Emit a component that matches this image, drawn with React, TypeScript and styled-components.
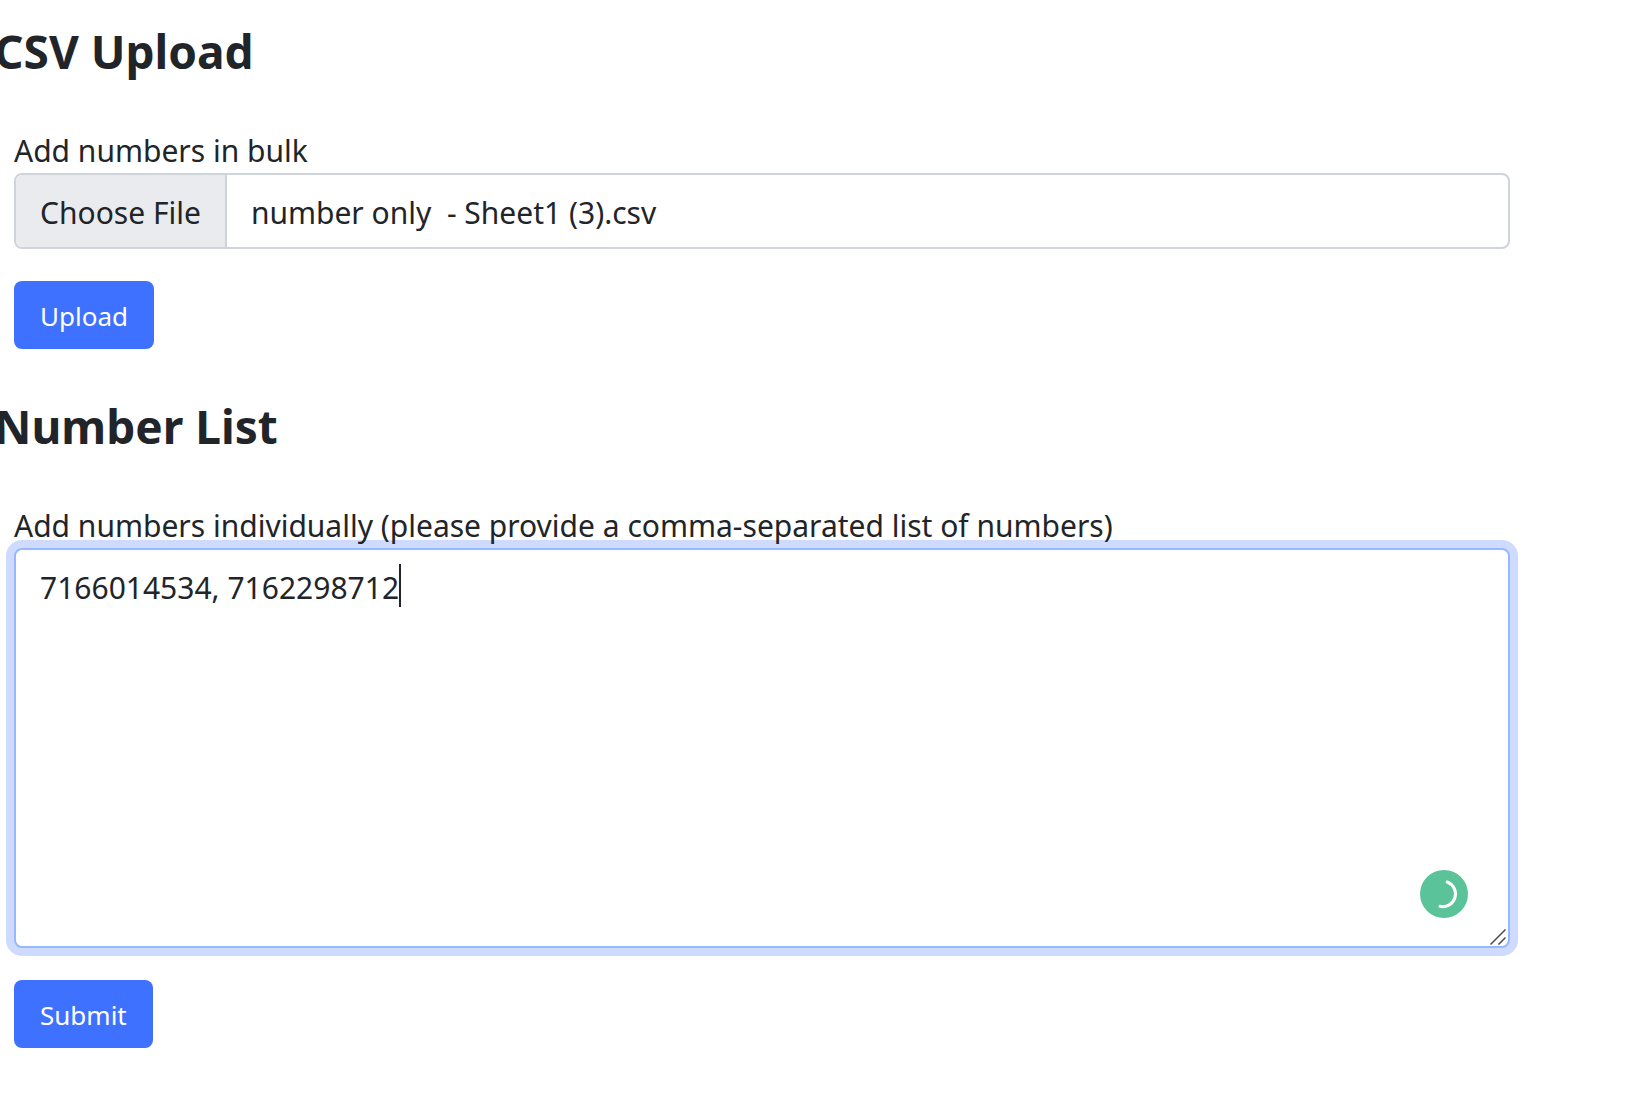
import React, { useLayoutEffect, useRef, useState } from "react";
import styled, { createGlobalStyle } from "styled-components";

const fontStack = '"Segoe UI", "Noto Sans", "Open Sans", sans-serif';

const GlobalStyle = createGlobalStyle`
  *, *::before, *::after { box-sizing: border-box; }
  body {
    margin: 0;
    overflow-x: hidden;
    background: #fff;
    color: #212529;
    font: 400 30px/48px ${fontStack};
  }
`;

const Page = styled.main`
  display: flex;
  flex-direction: column;
  gap: 49px;
  padding: 23px 130px 56px 14px;
`;

const Section = styled.section`
  display: flex;
  flex-direction: column;
`;

const Heading = styled.h2`
  margin: 0 0 46px -20px;
  font-size: 46px;
  font-weight: 700;
  line-height: 56px;
`;

const Form = styled.form`
  display: flex;
  flex-direction: column;
  align-items: stretch;
`;

const FieldLabel = styled.label`
  position: relative;
  z-index: 1;
  align-self: flex-start;
  padding-top: 4px;
  line-height: 44px;
`;

const FileField = styled.label`
  position: relative;
  display: flex;
  border: 2px solid #ced4da;
  border-radius: 8px;
  overflow: hidden;
  cursor: pointer;
`;

const FileInput = styled.input`
  position: absolute;
  inset: 0;
  width: 100%;
  height: 100%;
  opacity: 0;
  cursor: pointer;
`;

const FileButton = styled.span`
  padding: 14px 24px 10px;
  border-right: 2px solid #ced4da;
  background: #eaebef;
`;

const FileName = styled.span`
  flex: 1;
  padding: 14px 24px 10px;
  white-space: pre;
`;

const TextField = styled.div`
  position: relative;
  display: flex;
`;

const TextArea = styled.textarea`
  flex: 1;
  height: 400px;
  padding: 14px 24px 10px;
  border: 2px solid #96b8ff;
  border-radius: 8px;
  outline: 0;
  box-shadow: 0 0 0 8px #cfdaff;
  background: #fff;
  color: inherit;
  font: inherit;
  caret-color: transparent;
  resize: none;
`;

const Caret = styled.span`
  position: absolute;
  top: 16px;
  width: 2px;
  height: 43px;
  background: #212529;
`;

const Badge = styled.svg`
  position: absolute;
  right: 42px;
  bottom: 30px;
  width: 48px;
  height: 48px;
`;

const Grip = styled.svg`
  position: absolute;
  right: 4px;
  bottom: 3px;
  width: 16px;
  height: 16px;
`;

const Button = styled.button`
  align-self: flex-start;
  margin-top: 32px;
  padding: 14px 26px 12px;
  border: 0;
  border-radius: 8px;
  background: #3e71ff;
  color: #fff;
  font: 400 26px/42px ${fontStack};
  cursor: pointer;
`;

const TEXT_START = 26;

function NumberField() {
  const [value, setValue] = useState("7166014534, 7162298712");
  const [caretX, setCaretX] = useState(TEXT_START);
  const field = useRef<HTMLTextAreaElement>(null);

  useLayoutEffect(() => {
    const context = document.createElement("canvas").getContext("2d");
    if (!context || !field.current) return;
    const { fontSize, fontFamily } = getComputedStyle(field.current);
    context.font = `${fontSize} ${fontFamily}`;
    setCaretX(TEXT_START + Math.round(context.measureText(value).width));
  }, [value]);

  return (
    <TextField>
      <TextArea
        id="numbers"
        ref={field}
        value={value}
        spellCheck={false}
        onChange={(event) => setValue(event.target.value)}
      />
      <Caret style={{ left: caretX }} />
      <Badge viewBox="0 0 48 48" aria-hidden="true">
        <circle cx="24" cy="24" r="24" fill="#5ac39a" />
        <path
          d="M27.2 12 A12.7 12.7 0 0 1 20 36.3"
          fill="none"
          stroke="#fff"
          strokeWidth="3"
          strokeLinecap="round"
        />
      </Badge>
      <Grip viewBox="0 0 16 16" aria-hidden="true">
        <path d="M0.5 15.5 L15.5 0.5 M8.5 15.5 L15.5 8.5" stroke="#4c4c4c" strokeWidth="1.5" />
      </Grip>
    </TextField>
  );
}

export default function App() {
  const [fileName, setFileName] = useState("number only  - Sheet1 (3).csv");

  return (
    <>
      <GlobalStyle />
      <Page>
        <Section>
          <Heading>CSV Upload</Heading>
          <Form onSubmit={(event) => event.preventDefault()}>
            <FieldLabel htmlFor="csv">Add numbers in bulk</FieldLabel>
            <FileField>
              <FileInput
                id="csv"
                type="file"
                accept=".csv"
                onChange={(event) => setFileName(event.target.files?.[0]?.name ?? "")}
              />
              <FileButton>Choose File</FileButton>
              <FileName>{fileName}</FileName>
            </FileField>
            <Button type="submit">Upload</Button>
          </Form>
        </Section>
        <Section>
          <Heading>Number List</Heading>
          <Form onSubmit={(event) => event.preventDefault()}>
            <FieldLabel htmlFor="numbers">
              Add numbers individually (please provide a comma-separated list of numbers)
            </FieldLabel>
            <NumberField />
            <Button type="submit">Submit</Button>
          </Form>
        </Section>
      </Page>
    </>
  );
}
